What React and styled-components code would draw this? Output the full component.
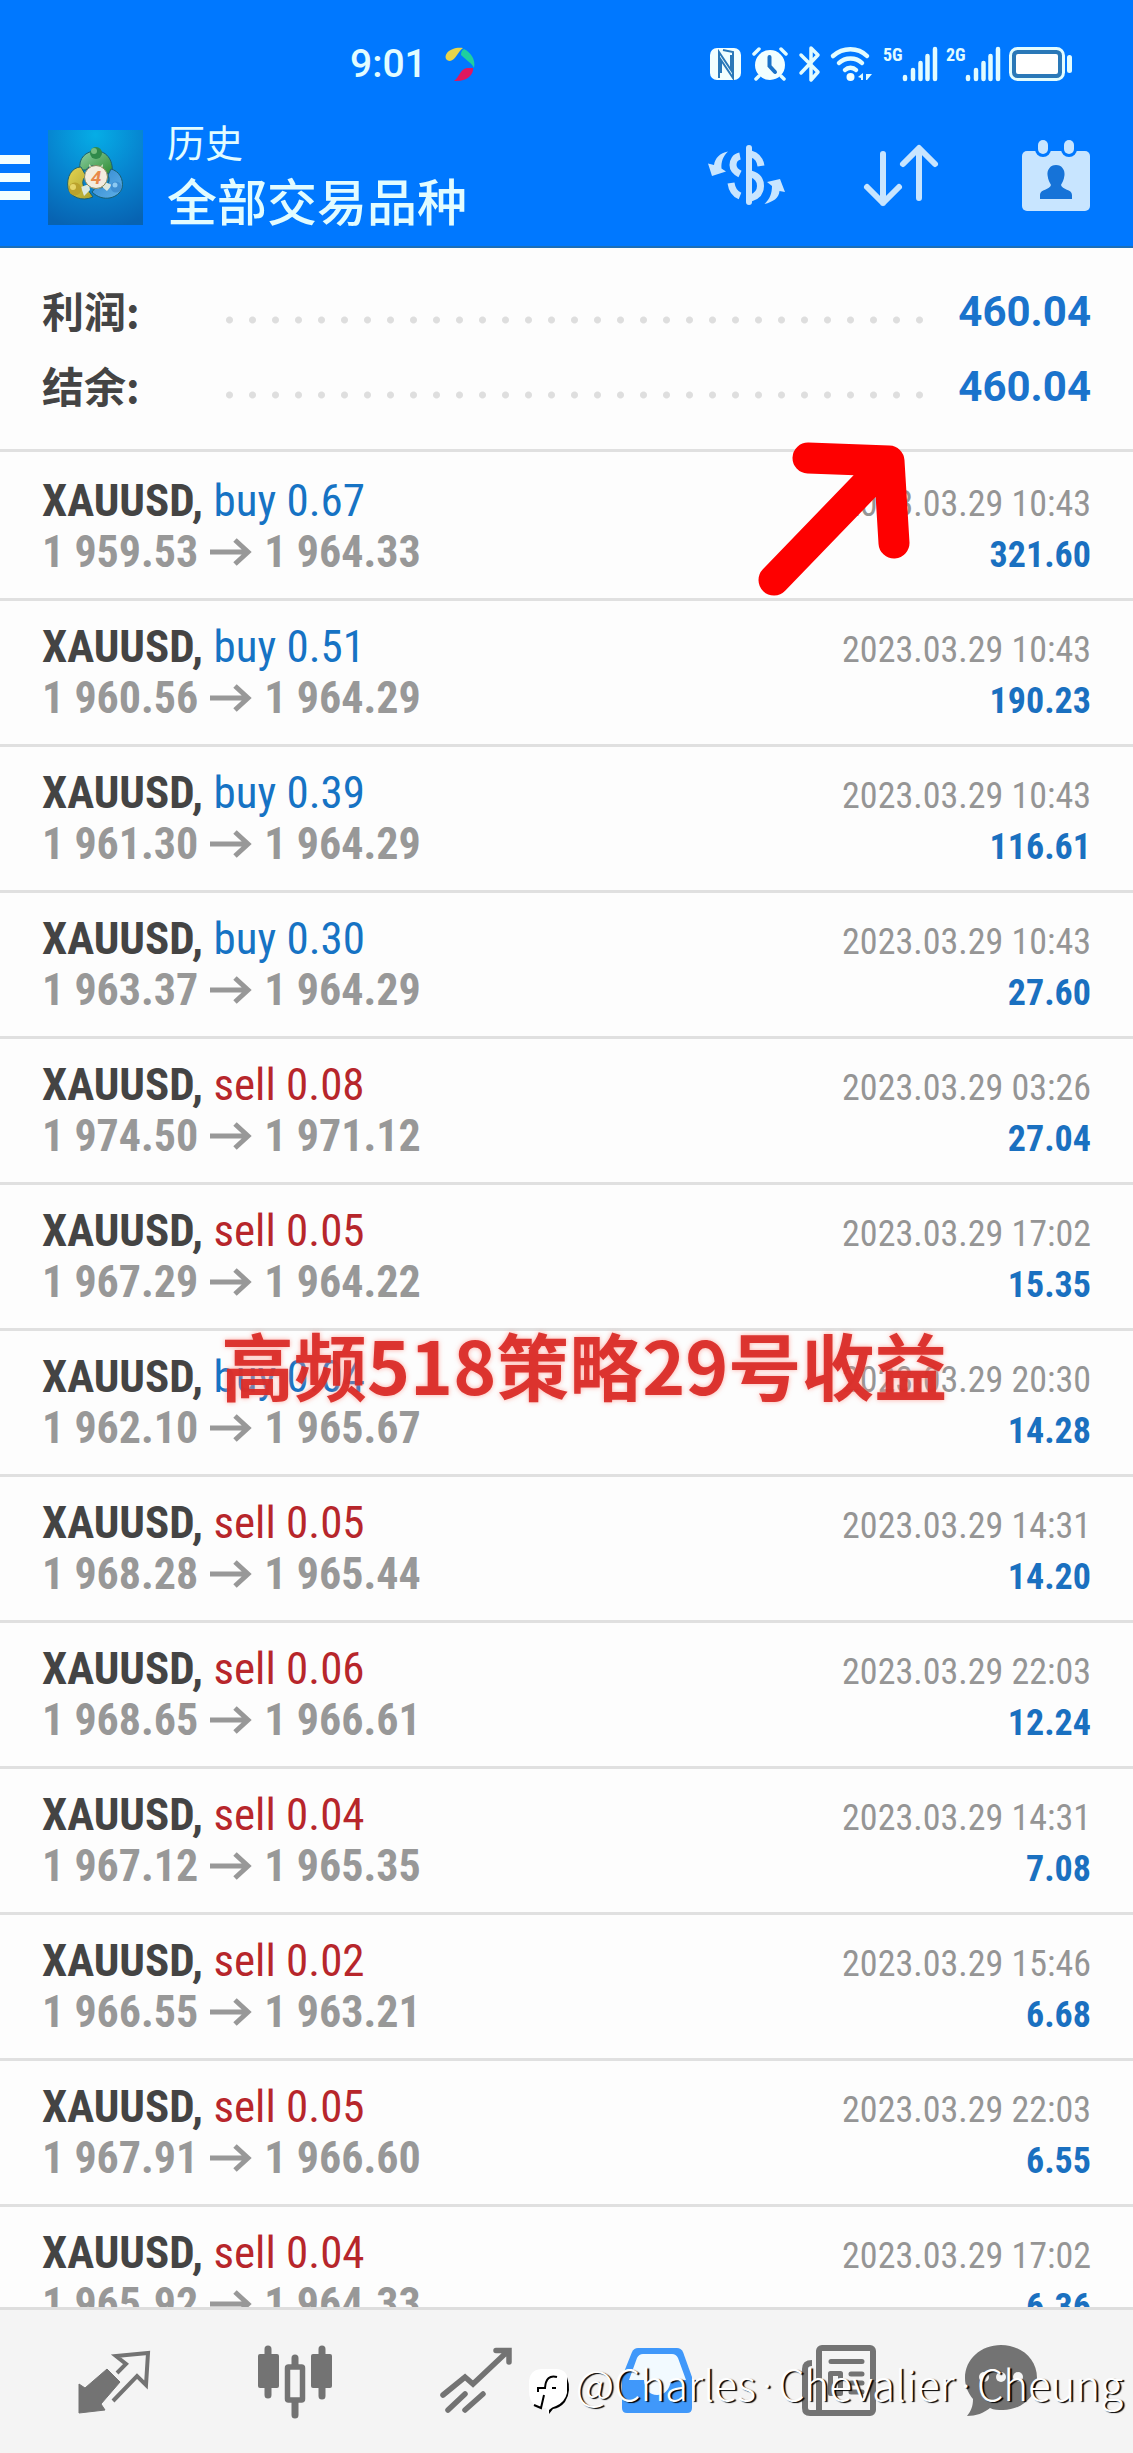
import React from "react";
import styled, { createGlobalStyle } from "styled-components";

const sans = `Roboto, "Noto Sans CJK SC", sans-serif`;
const narrow = `"Roboto Condensed", Roboto, "Noto Sans CJK SC", sans-serif`;

const GlobalStyle = createGlobalStyle`
  * {
    box-sizing: border-box;
  }

  body {
    margin: 0;
    background-color: #fdfdfd;
    font-family: ${sans};
  }

  button {
    border: none;
    background: none;
    padding: 0;
    cursor: pointer;
  }

  svg {
    display: block;
    overflow: visible;
  }
`;

const Page = styled.div`
  display: flex;
  flex-direction: column;
  height: 100vh;
  position: relative;
  overflow: hidden;
`;

const Header = styled.header`
  background-color: #0078ff;
  border-bottom: 2px solid #1c6fb8;
  color: #e2fcff;
`;

const StatusBar = styled.div`
  display: flex;
  justify-content: space-between;
  align-items: center;
  height: 128px;
  padding: 0 61px 0 350px;
`;

const Clock = styled.div`
  display: flex;
  align-items: center;
  gap: 18px;
  font-size: 39px;
  font-weight: 500;
`;

const StatusIcons = styled.div`
  display: flex;
  align-items: center;
  gap: 11px;
`;

const Signal = styled.div`
  display: flex;
  align-items: flex-start;
  justify-content: space-between;
  width: 52px;
  font-family: ${narrow};
  font-size: 18px;
  line-height: 16px;
  font-weight: bold;
`;

const AppBar = styled.div`
  display: flex;
  align-items: center;
  height: 118px;
  padding-bottom: 20px;
`;

const MenuButton = styled.button`
  display: flex;
  flex-direction: column;
  gap: 9px;
  width: 30px;
  margin-right: 18px;
`;

const MenuLine = styled.span`
  height: 9px;
  background-color: #f2ffff;
`;

const Titles = styled.div`
  flex: 1;
  padding: 10px 0 0 24px;
`;

const Subtitle = styled.div`
  font-size: 38px;
  line-height: 44px;
`;

const Title = styled.h1`
  margin: 0;
  font-size: 50px;
  line-height: 76px;
  font-weight: 500;
`;

const ActionButton = styled.button`
  display: flex;
  justify-content: center;
  width: 155px;
  color: #c8e5ff;
`;

const Summary = styled.dl`
  margin: 0;
  padding: 26px 42px 25px;
  border-bottom: 3px solid #e0e0e0;
`;

const SummaryRow = styled.div`
  display: flex;
  align-items: center;
  height: 75px;
`;

const SummaryLabel = styled.dt`
  width: 176px;
  padding-bottom: 4px;
  color: #444;
  font-family: "Noto Sans CJK SC", sans-serif;
  font-size: 42px;
  line-height: 60px;
  font-weight: bold;
`;

const Dots = styled.div`
  flex: 1;
  height: 8px;
  margin: 16px 32px 0 0;
  background: radial-gradient(circle, #dedede 3px, transparent 4px) 0 0 / 23px 8px repeat-x;
`;

const SummaryValue = styled.dd`
  margin: 0;
  color: #1a73cc;
  font-size: 42px;
  font-weight: bold;
`;

const Deals = styled.ul`
  flex: 1;
  min-height: 0;
  overflow: hidden;
  margin: 0;
  padding: 3px 0 0;
  list-style: none;
  font-family: ${narrow};
`;

const Deal = styled.li`
  display: flex;
  justify-content: space-between;
  height: 146px;
  padding: 20px 42px 0;
  border-bottom: 3px solid #e0e0e0;
`;

const DealSide = styled.div`
  text-align: ${(props) => (props.$right ? "right" : "left")};
`;

const DealLine = styled.div`
  display: flex;
  align-items: center;
  height: 51px;
  color: #444;
  font-size: 45px;
  font-weight: bold;
  white-space: pre;
`;

const Side = styled.span`
  color: ${(props) => (props.$side === "buy" ? "#1673c4" : "#b7262b")};
  font-weight: normal;
`;

const Prices = styled(DealLine)`
  gap: 12px;
  color: #989898;
  font-size: 44px;
`;

const DealTime = styled.div`
  height: 51px;
  color: #959595;
  font-size: 36px;
  line-height: 58px;
`;

const DealProfit = styled(DealTime)`
  color: #1a70c0;
  font-weight: bold;
`;

const BottomNav = styled.nav`
  display: grid;
  grid-template-columns: repeat(5, 5fr) 4fr;
  height: 146px;
  padding: 0 60px 0 24px;
  border-top: 3px solid #dedede;
  background-color: #f4f4f4;
`;

const NavButton = styled.button`
  display: flex;
  justify-content: center;
  align-items: center;
  color: ${(props) => (props.$active ? "#4098fa" : "#737373")};
`;

const RedArrow = styled.svg`
  position: absolute;
  top: 440px;
  right: 220px;
`;

const Caption = styled.div`
  position: absolute;
  top: 1309px;
  left: 221px;
  color: rgba(217, 40, 36, 0.92);
  font-family: "Noto Sans CJK SC", sans-serif;
  font-size: 73px;
  line-height: 108px;
  font-weight: bold;
  white-space: nowrap;
  text-shadow: 0 0 5px rgba(255, 150, 140, 0.8);
`;

const Watermark = styled.div`
  position: absolute;
  right: 10px;
  bottom: 38px;
  display: flex;
  align-items: flex-end;
  gap: 6px;
  color: #fff;
  font-family: "Noto Sans CJK SC", sans-serif;
  font-size: 42px;
  line-height: 56px;
  font-weight: 300;
  white-space: nowrap;
  text-shadow: 2px 1px 1px #000;
`;

const Dot = styled.span`
  margin: 0 6px;
  font-family: Roboto, sans-serif;
`;

const deals = [
  { side: "buy", lot: "0.67", open: "1 959.53", close: "1 964.33", time: "2023.03.29 10:43", profit: "321.60" },
  { side: "buy", lot: "0.51", open: "1 960.56", close: "1 964.29", time: "2023.03.29 10:43", profit: "190.23" },
  { side: "buy", lot: "0.39", open: "1 961.30", close: "1 964.29", time: "2023.03.29 10:43", profit: "116.61" },
  { side: "buy", lot: "0.30", open: "1 963.37", close: "1 964.29", time: "2023.03.29 10:43", profit: "27.60" },
  { side: "sell", lot: "0.08", open: "1 974.50", close: "1 971.12", time: "2023.03.29 03:26", profit: "27.04" },
  { side: "sell", lot: "0.05", open: "1 967.29", close: "1 964.22", time: "2023.03.29 17:02", profit: "15.35" },
  { side: "buy", lot: "0.04", open: "1 962.10", close: "1 965.67", time: "2023.03.29 20:30", profit: "14.28" },
  { side: "sell", lot: "0.05", open: "1 968.28", close: "1 965.44", time: "2023.03.29 14:31", profit: "14.20" },
  { side: "sell", lot: "0.06", open: "1 968.65", close: "1 966.61", time: "2023.03.29 22:03", profit: "12.24" },
  { side: "sell", lot: "0.04", open: "1 967.12", close: "1 965.35", time: "2023.03.29 14:31", profit: "7.08" },
  { side: "sell", lot: "0.02", open: "1 966.55", close: "1 963.21", time: "2023.03.29 15:46", profit: "6.68" },
  { side: "sell", lot: "0.05", open: "1 967.91", close: "1 966.60", time: "2023.03.29 22:03", profit: "6.55" },
  { side: "sell", lot: "0.04", open: "1 965.92", close: "1 964.33", time: "2023.03.29 17:02", profit: "6.36" },
];

const summary = [
  { label: "利润:", value: "460.04" },
  { label: "结余:", value: "460.04" },
];

const Swirl = () => (
  <svg width="30" height="34" viewBox="0 0 30 34">
    <path d="M5 14C1 14 -1 10 2 6C5 2 12 0 18 1C13 4 11 13 5 14Z" fill="#e8d44a" />
    <path d="M19 2C25 5 31 12 29 21C27 16 22 14 16 8C16 5 17 3 19 2Z" fill="#1fcf9f" />
    <path d="M28 21C29 28 21 35 9 34C14 31 15 22 22 21Z" fill="#e0185e" />
  </svg>
);

const NfcIcon = () => (
  <svg width="31" height="34" viewBox="0 0 31 34">
    <rect y="1" width="31" height="32" rx="7" fill="#f2ffff" />
    <path d="M9 31V5L21 23V8M13 3L23 5V31L11 13V26" fill="none" stroke="#2a78b8" strokeWidth="2" />
  </svg>
);

const AlarmIcon = () => (
  <svg width="36" height="34" viewBox="0 0 36 34">
    <g stroke="#e2fcff" strokeWidth="3.5" strokeLinecap="round">
      <path d="M2 7L7 2M34 7L29 2M7 29L4 32M29 29L32 32" />
    </g>
    <circle cx="18" cy="18" r="15" fill="#f2ffff" />
    <path d="M17.5 10V19L23 25" fill="none" stroke="#1a72c8" strokeWidth="4" strokeLinecap="round" />
  </svg>
);

const BluetoothIcon = () => (
  <svg width="21" height="38" viewBox="0 0 21 38">
    <path
      d="M2 10L19 27L12 35V3L19 10L2 28"
      fill="none"
      stroke="#e2fcff"
      strokeWidth="3.5"
      strokeLinecap="round"
      strokeLinejoin="round"
    />
  </svg>
);

const WifiIcon = () => (
  <svg width="41" height="34" viewBox="0 0 41 34">
    <g fill="none" stroke="#e2fcff" strokeWidth="4.5" strokeLinecap="round">
      <path d="M2 9C12 0 27 0 36 9" />
      <path d="M8 16C14 10 25 10 31 16" />
      <path d="M14 23C17 20 22 20 25 23" />
    </g>
    <circle cx="19.5" cy="30" r="4" fill="#f2ffff" />
    <path d="M32 26V33H30V31L27 30ZM35 27H41L36 33H35Z" fill="#e2fcff" />
  </svg>
);

const Bars = () => (
  <svg width="34" height="34" viewBox="0 0 34 34">
    <path
      d="M2 30V32M10 23V32M17.5 16V32M24.5 9V32M32 2V32"
      stroke="#e2fcff"
      strokeWidth="4.5"
      strokeLinecap="round"
    />
  </svg>
);

const BatteryIcon = () => (
  <svg width="63" height="34" viewBox="0 0 63 34">
    <rect x="1.5" y="1.5" width="53" height="31" rx="7" fill="#2a78b8" stroke="#e2fcff" strokeWidth="3" />
    <rect x="7" y="7" width="42" height="20" rx="2" fill="#fff" />
    <rect x="58" y="8" width="5" height="18" rx="2.5" fill="#e2fcff" />
  </svg>
);

const Logo = () => (
  <svg width="95" height="95" viewBox="0 0 95 95">
    <defs>
      <radialGradient id="tile" cx="0.5" cy="0.05" r="1">
        <stop offset="0" stopColor="#06ade6" />
        <stop offset="0.5" stopColor="#0785d0" />
        <stop offset="1" stopColor="#0763b2" />
      </radialGradient>
      <linearGradient id="green" x1="0" y1="0" x2="1" y2="1">
        <stop offset="0" stopColor="#8fd0a8" />
        <stop offset="1" stopColor="#2c8a2c" />
      </linearGradient>
      <linearGradient id="gold" x1="0" y1="0" x2="1" y2="1">
        <stop offset="0" stopColor="#e5d552" />
        <stop offset="1" stopColor="#a9a02c" />
      </linearGradient>
      <linearGradient id="azure" x1="0" y1="0" x2="1" y2="1">
        <stop offset="0" stopColor="#2f86cf" />
        <stop offset="1" stopColor="#5fb0e8" />
      </linearGradient>
    </defs>
    <rect width="95" height="95" fill="url(#tile)" />
    <g stroke="#1b5f70" strokeWidth="1">
      <path d="M32 40C30 28 38 21 48 21C60 21 66 32 64 45L56 42C54 35 42 33 38 40Z" fill="url(#green)" />
      <path d="M33 37C24 37 18 47 20 58C22 67 34 72 45 67L40 60C34 58 33 50 38 46Z" fill="url(#gold)" />
      <path d="M63 39C71 41 76 49 74 58C71 68 55 73 44 62L48 57C56 60 64 54 60 45Z" fill="url(#azure)" />
    </g>
    <path d="M41 34L48 41L55 34L53 46H43Z" fill="#e2efd8" />
    <path d="M33 57L41 54L42 60L36 66ZM57 52L64 55L59 61L53 56Z" fill="#dbe8e0" />
    <circle cx="48" cy="23" r="6" fill="#2f8a4a" />
    <circle cx="46" cy="21" r="3" fill="#77bd80" />
    <circle cx="27" cy="59" r="6.5" fill="#bba22c" />
    <circle cx="25" cy="57" r="3" fill="#e6d568" />
    <circle cx="68" cy="57" r="5.5" fill="#3f8fd2" />
    <circle cx="67" cy="55" r="2.5" fill="#8cc9f2" />
    <circle cx="48" cy="47" r="11.5" fill="#f3ecdf" stroke="#8d8a5a" />
    <text x="48" y="54" textAnchor="middle" fontSize="19" fontStyle="italic" fontWeight="bold" fill="#e8884a">
      4
    </text>
  </svg>
);

const CurrencyIcon = () => (
  <svg width="80" height="72" viewBox="0 0 80 72">
    <g fill="none" stroke="currentColor" strokeWidth="7">
      <path d="M43 7V61" strokeWidth="6" strokeLinecap="round" />
      <path d="M45 13C52 15 54 19 55 25" />
      <path d="M45 33C52 35 54.5 40 54.5 45C54.5 51 51 55 45 57" />
      <path d="M34 15C29 16 27 20 27 24C27 28 30 31 34 33" />
      <path d="M25 42C26 49 29 53 34 55" />
    </g>
    <path d="M22 10.5C14 12 9 17 8 24L2 22.5L6 35L20 30.5L15.5 27.5C15 21 17 15 22 10.5Z" fill="currentColor" />
    <path d="M58.5 63C67 61 73 57 73.5 50L79 51L74 38L61 41L66 45C66 52 64 58 58.5 63Z" fill="currentColor" />
  </svg>
);

const SortIcon = () => (
  <svg width="80" height="72" viewBox="0 0 80 72">
    <path
      d="M22 13V62M6 46L22 62L38 46M58 57V8M42 23L58 7L74 23"
      fill="none"
      stroke="currentColor"
      strokeWidth="6"
      strokeLinecap="round"
      strokeLinejoin="round"
    />
  </svg>
);

const CalendarIcon = () => (
  <svg width="80" height="72" viewBox="0 0 80 72">
    <rect x="6" y="10" width="68" height="60" rx="5" fill="currentColor" />
    <rect x="19" y="-4" width="16" height="20" rx="8" fill="#0078ff" />
    <rect x="45" y="-4" width="16" height="20" rx="8" fill="#0078ff" />
    <rect x="22" y="-1" width="10" height="14" rx="5" fill="currentColor" />
    <rect x="48" y="-1" width="10" height="14" rx="5" fill="currentColor" />
    <path
      d="M40 24C46 24 49 29 48.5 34C48 39 46 42 45 44C46 49 56 48 56 54V58H24V54C24 48 34 49 35 44C34 42 32 39 31.5 34C31 29 34 24 40 24Z"
      fill="#1673d8"
    />
  </svg>
);

const QuotesIcon = () => (
  <svg width="80" height="80" viewBox="0 0 80 80">
    <path d="M5 42L11 46L33 27L46 40L27 62L31 68L5 71Z" fill="currentColor" stroke="currentColor" strokeLinejoin="round" />
    <path d="M43 31L52 22L42 14L74 11L72 43L63 34L39 59" fill="none" stroke="currentColor" strokeWidth="4" />
  </svg>
);

const CandlesIcon = () => (
  <svg width="80" height="80" viewBox="0 0 80 80">
    <path d="M13 7V53M40 16V28M40 58V73M67 7V54" stroke="currentColor" strokeWidth="7" strokeLinecap="round" />
    <rect x="3" y="12" width="21" height="34" rx="2" fill="currentColor" />
    <rect x="56" y="12" width="21" height="34" rx="2" fill="currentColor" />
    <rect x="32.5" y="25" width="15" height="33" rx="1" fill="#f4f4f4" stroke="currentColor" strokeWidth="5.5" />
  </svg>
);

const TrendIcon = () => (
  <svg width="80" height="80" viewBox="0 0 80 80">
    <path
      d="M7 53L29 35L37 42L72 9M60 8.5H73V20M12 68L29 52M29 68L47 52"
      fill="none"
      stroke="currentColor"
      strokeWidth="5.5"
      strokeLinecap="round"
    />
  </svg>
);

const InboxIcon = () => (
  <svg width="80" height="80" viewBox="0 0 80 80">
    <path
      d="M21 6H60Q64 6 66 10L75 35V66Q75 71 70 71H10Q5 71 5 66V35L15 10Q17 6 21 6Z"
      fill="currentColor"
    />
    <path d="M26 12H55Q59 12 61 16L69 38H54C53 48 47 53 40 53C33 53 28 48 27 38H12L20 16Q22 12 26 12Z" fill="#f2faff" />
  </svg>
);

const NewsIcon = () => (
  <svg width="80" height="80" viewBox="0 0 80 80">
    <g fill="none" stroke="currentColor" strokeWidth="6" strokeLinejoin="round">
      <rect x="21" y="6" width="54" height="65" rx="3" />
      <path d="M14 21Q7 21 7 27V66Q7 71 12 71H24" />
      <rect x="32.5" y="31.5" width="10" height="20" strokeWidth="5" />
      <path d="M33 19.5H64M53 32H64M53 41H64M53 50H64" strokeWidth="5" strokeLinecap="round" />
    </g>
  </svg>
);

const ChatIcon = () => (
  <svg width="80" height="80" viewBox="0 0 80 80">
    <path d="M40 3C60 3 76 17 76 36C76 55 60 68 42 68C37 68 33 68 29 66C23 71 15 74 6 74C10 69 12 64 12 57C7 51 4 44 4 36C4 17 20 3 40 3Z" fill="currentColor" />
    <circle cx="23" cy="35" r="5" fill="#f4f4f4" />
    <circle cx="40" cy="35" r="5" fill="#f4f4f4" />
    <circle cx="57" cy="35" r="5" fill="#f4f4f4" />
  </svg>
);

const ArrowRight = () => (
  <svg width="42" height="28" viewBox="0 0 42 28">
    <path d="M0 14H38M25 2L38 14L25 26" fill="none" stroke="currentColor" strokeWidth="5" />
  </svg>
);

const WatermarkLogo = () => (
  <svg width="41" height="46" viewBox="0 0 41 46">
    <path d="M12 0H28Q39 1 39 13V24Q38 38 25 39L19 45L17 39Q0 39 0 22V14Q0 1 12 0Z" fill="#fff" />
    <path d="M38 8Q43 22 36 33Q31 39 24 40L20 45V41Q23 38 27 37Q36 33 38 24Z" fill="#000" />
    <path d="M28 8Q17 5 16 19H9V23M23 19H27M15 26L12 39L5 36" fill="none" stroke="#000" strokeWidth="2" />
  </svg>
);

const actions = [
  { name: "货币", Icon: CurrencyIcon },
  { name: "排序", Icon: SortIcon },
  { name: "日期", Icon: CalendarIcon },
];

const tabs = [
  { name: "行情", Icon: QuotesIcon },
  { name: "图表", Icon: CandlesIcon },
  { name: "交易", Icon: TrendIcon },
  { name: "历史", Icon: InboxIcon, active: true },
  { name: "新闻", Icon: NewsIcon },
  { name: "聊天", Icon: ChatIcon },
];

function App() {
  return (
    <Page>
      <GlobalStyle />
      <Header>
        <StatusBar>
          <Clock>
            9:01
            <Swirl />
          </Clock>
          <StatusIcons>
            <NfcIcon />
            <AlarmIcon />
            <BluetoothIcon />
            <WifiIcon />
            <Signal>
              5G
              <Bars />
            </Signal>
            <Signal>
              2G
              <Bars />
            </Signal>
            <BatteryIcon />
          </StatusIcons>
        </StatusBar>
        <AppBar>
          <MenuButton aria-label="菜单">
            <MenuLine />
            <MenuLine />
            <MenuLine />
          </MenuButton>
          <Logo />
          <Titles>
            <Subtitle>历史</Subtitle>
            <Title>全部交易品种</Title>
          </Titles>
          {actions.map(({ name, Icon }) => (
            <ActionButton key={name} aria-label={name}>
              <Icon />
            </ActionButton>
          ))}
        </AppBar>
      </Header>

      <Summary>
        {summary.map((e) => (
          <SummaryRow key={e.label}>
            <SummaryLabel>{e.label}</SummaryLabel>
            <Dots />
            <SummaryValue>{e.value}</SummaryValue>
          </SummaryRow>
        ))}
      </Summary>

      <Deals>
        {deals.map((e, i) => (
          <Deal key={i}>
            <DealSide>
              <DealLine>
                {"XAUUSD, "}
                <Side $side={e.side}>
                  {e.side} {e.lot}
                </Side>
              </DealLine>
              <Prices>
                {e.open}
                <ArrowRight />
                {e.close}
              </Prices>
            </DealSide>
            <DealSide $right>
              <DealTime>{e.time}</DealTime>
              <DealProfit>{e.profit}</DealProfit>
            </DealSide>
          </Deal>
        ))}
      </Deals>

      <BottomNav>
        {tabs.map(({ name, Icon, active }) => (
          <NavButton key={name} $active={active} aria-label={name}>
            <Icon />
          </NavButton>
        ))}
      </BottomNav>

      <RedArrow width="156" height="160" viewBox="0 0 156 160">
        <path
          d="M51 18L132 21L137 103M17 140L128 25"
          fill="none"
          stroke="#fe0000"
          strokeWidth="31"
          strokeLinecap="round"
          strokeLinejoin="round"
        />
      </RedArrow>
      <Caption>高频518策略29号收益</Caption>
      <Watermark>
        <WatermarkLogo />
        <span>
          @Charles<Dot>·</Dot>Chevalier<Dot>·</Dot>Cheung
        </span>
      </Watermark>
    </Page>
  );
}

export default App;
